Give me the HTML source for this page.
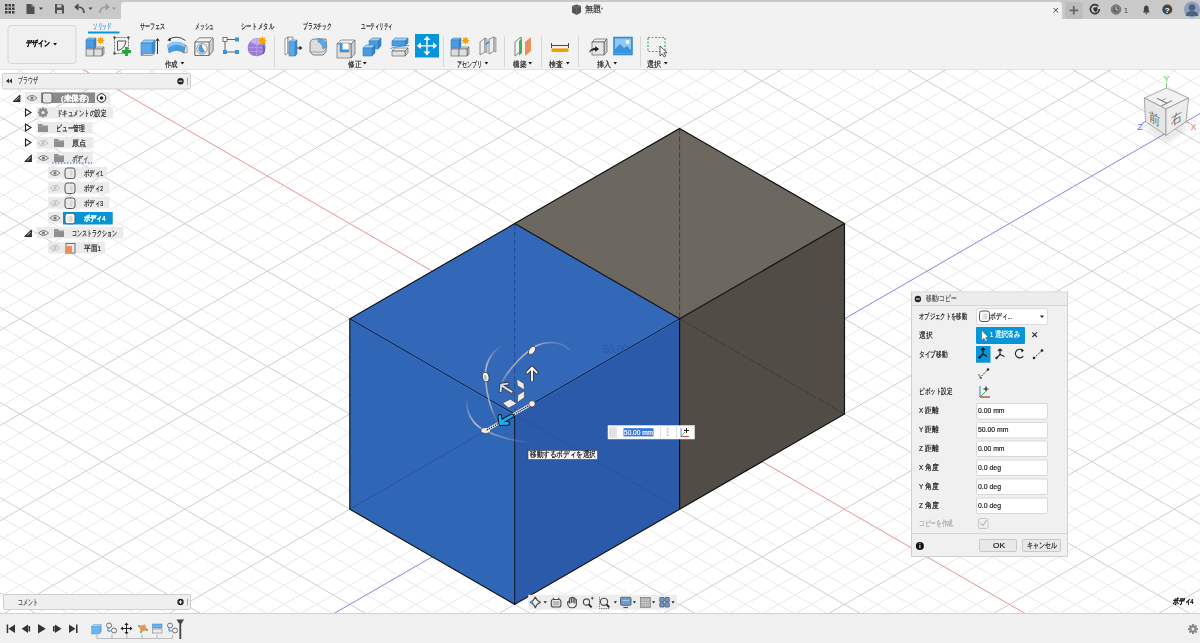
<!DOCTYPE html>
<html><head><meta charset="utf-8"><style>
*{box-sizing:border-box}
body{margin:0;width:1200px;height:643px;overflow:hidden;position:relative;background:#fff;font-family:"Liberation Sans",sans-serif;color:#222}
.a{position:absolute}
.t{white-space:nowrap;line-height:1;transform-origin:0 0;-webkit-text-stroke:0.2px currentColor}
</style></head><body>
<svg width="1200" height="643" style="position:absolute;left:0;top:0">
<defs><clipPath id="vpc"><rect x="0" y="69.5" width="1200" height="543.5"/></clipPath>
<linearGradient id="vcs" x1="0" y1="0" x2="0" y2="1"><stop offset="0" stop-color="#000" stop-opacity="0.18"/><stop offset="1" stop-color="#000" stop-opacity="0"/></linearGradient></defs>
<g clip-path="url(#vpc)">
<rect x="0" y="69.5" width="1200" height="543.5" fill="#ffffff"/>
<path d="M0 -606.67L1200 86.15M0 -587.63L1200 105.19M0 -568.59L1200 124.23M0 -530.51L1200 162.31M0 -511.47L1200 181.35M0 -492.43L1200 200.39M0 -473.39L1200 219.43M0 -435.31L1200 257.51M0 -416.27L1200 276.55M0 -397.23L1200 295.59M0 -378.19L1200 314.63M0 -340.11L1200 352.71M0 -321.07L1200 371.75M0 -302.03L1200 390.79M0 -282.99L1200 409.83M0 -244.91L1200 447.91M0 -225.87L1200 466.95M0 -206.83L1200 485.99M0 -187.79L1200 505.03M0 -149.71L1200 543.11M0 -130.67L1200 562.15M0 -111.63L1200 581.19M0 -92.59L1200 600.23M0 -54.51L1200 638.31M0 -35.47L1200 657.35M0 -16.43L1200 676.39M0 2.61L1200 695.43M0 40.69L1200 733.51M0 59.73L1200 752.55M0 78.77L1200 771.59M0 97.81L1200 790.63M0 135.89L1200 828.71M0 154.93L1200 847.75M0 173.97L1200 866.79M0 193.01L1200 885.83M0 231.09L1200 923.91M0 250.13L1200 942.95M0 269.17L1200 961.99M0 288.21L1200 981.03M0 326.29L1200 1019.11M0 345.33L1200 1038.15M0 364.37L1200 1057.19M0 383.41L1200 1076.23M0 421.49L1200 1114.31M0 440.53L1200 1133.35M0 459.57L1200 1152.39M0 478.61L1200 1171.43M0 516.69L1200 1209.51M0 535.73L1200 1228.55M0 554.77L1200 1247.59M0 573.81L1200 1266.63M0 611.89L1200 1304.71M0 82.83L1200 -609.99M0 101.87L1200 -590.95M0 120.91L1200 -571.91M0 158.99L1200 -533.83M0 178.03L1200 -514.79M0 197.07L1200 -495.75M0 216.11L1200 -476.71M0 254.19L1200 -438.63M0 273.23L1200 -419.59M0 292.27L1200 -400.55M0 311.31L1200 -381.51M0 349.39L1200 -343.43M0 368.43L1200 -324.39M0 387.47L1200 -305.35M0 406.51L1200 -286.31M0 444.59L1200 -248.23M0 463.63L1200 -229.19M0 482.67L1200 -210.15M0 501.71L1200 -191.11M0 539.79L1200 -153.03M0 558.83L1200 -133.99M0 577.87L1200 -114.95M0 596.91L1200 -95.91M0 634.99L1200 -57.83M0 654.03L1200 -38.79M0 673.07L1200 -19.75M0 692.11L1200 -0.71M0 730.19L1200 37.37M0 749.23L1200 56.41M0 768.27L1200 75.45M0 787.31L1200 94.49M0 825.39L1200 132.57M0 844.43L1200 151.61M0 863.47L1200 170.65M0 882.51L1200 189.69M0 920.59L1200 227.77M0 939.63L1200 246.81M0 958.67L1200 265.85M0 977.71L1200 284.89M0 1015.79L1200 322.97M0 1034.83L1200 342.01M0 1053.87L1200 361.05M0 1072.91L1200 380.09M0 1110.99L1200 418.17M0 1130.03L1200 437.21M0 1149.07L1200 456.25M0 1168.11L1200 475.29M0 1206.19L1200 513.37M0 1225.23L1200 532.41M0 1244.27L1200 551.45M0 1263.31L1200 570.49M0 1301.39L1200 608.57" stroke="#e8e8e8" stroke-width="1" fill="none"/>
<path d="M0 -549.55L1200 143.27M0 -454.35L1200 238.47M0 -359.15L1200 333.67M0 -263.95L1200 428.87M0 -168.75L1200 524.07M0 -73.55L1200 619.27M0 21.65L1200 714.47M0 116.85L1200 809.67M0 212.05L1200 904.87M0 307.25L1200 1000.07M0 402.45L1200 1095.27M0 497.65L1200 1190.47M0 592.85L1200 1285.67M0 139.95L1200 -552.87M0 235.15L1200 -457.67M0 330.35L1200 -362.47M0 425.55L1200 -267.27M0 520.75L1200 -172.07M0 615.95L1200 -76.87M0 711.15L1200 18.33M0 806.35L1200 113.53M0 901.55L1200 208.73M0 996.75L1200 303.93M0 1091.95L1200 399.13M0 1187.15L1200 494.33M0 1282.35L1200 589.53" stroke="#cecece" stroke-width="1" fill="none"/>
<path d="M0 21.65L1200 714.47" stroke="#f4a0a0" stroke-width="1" fill="none"/>
<path d="M0 806.35L1200 113.53" stroke="#9393f2" stroke-width="1" fill="none"/>
<polygon points="679.60,128.40 844.50,223.60 679.60,318.80 514.70,223.60" fill="#6c675f"/>
<polygon points="844.50,223.60 844.50,414.00 679.60,509.20 679.60,318.80" fill="#514c45"/>
<path d="M679.60 128.40L679.60 318.80" stroke="#45413b" stroke-width="1" stroke-dasharray="6,2" fill="none"/>
<path d="M679.60 318.80L844.50 414.00" stroke="#3d3a35" stroke-width="1" stroke-dasharray="6,2" fill="none"/>
<polygon points="514.70,223.60 679.60,318.80 514.70,414.00 349.80,318.80" fill="#3368b8"/>
<polygon points="349.80,318.80 514.70,414.00 514.70,604.40 349.80,509.20" fill="#3066b6"/>
<polygon points="514.70,414.00 679.60,318.80 679.60,509.20 514.70,604.40" fill="#2a5aa9"/>
<path d="M514.70 414.00L679.60 509.20M514.70 414.00L349.80 509.20" stroke="#2552a2" stroke-width="0.9" fill="none"/><path d="M514.70 223.60L514.70 414.00" stroke="#1f4c98" stroke-width="1" stroke-dasharray="6,2" fill="none"/>
<path d="M349.80 318.80L514.70 414.00M514.70 414.00L679.60 318.80" stroke="#3c7ad6" stroke-width="2.4" fill="none"/><path d="M349.80 318.80L514.70 414.00M514.70 414.00L679.60 318.80" stroke="#14223f" stroke-width="1.1" fill="none"/><path d="M514.70 414.00L514.70 604.40" stroke="#3a78d0" stroke-width="2.6" fill="none"/><path d="M514.70 414.00L514.70 604.40" stroke="#13203c" stroke-width="1.5" fill="none"/>
<path d="M679.60,128.40L844.50,223.60L844.50,414.00L679.60,509.20L514.70,604.40L349.80,509.20L349.80,318.80L514.70,223.60Z" stroke="#111" stroke-width="1.15" fill="none"/>
<path d="M514.70 223.60L679.60 318.80M679.60 318.80L844.50 223.60M679.60 318.80L679.60 509.20" stroke="#111" stroke-width="1.2" fill="none"/>
<text x="603" y="353" font-size="10" fill="#2659ad" font-family="Liberation Sans, sans-serif">50.00</text>

<defs>
<linearGradient id="arcA" x1="0" y1="0" x2="0" y2="1"><stop offset="0" stop-color="#c4c4c4" stop-opacity="0"/><stop offset="0.25" stop-color="#c4c4c4" stop-opacity="0.9"/><stop offset="0.8" stop-color="#bcbcbc" stop-opacity="0.8"/><stop offset="1" stop-color="#bcbcbc" stop-opacity="0.1"/></linearGradient>
<linearGradient id="arcB" x1="1" y1="0" x2="0" y2="1"><stop offset="0" stop-color="#c4c4c4" stop-opacity="0"/><stop offset="0.3" stop-color="#c4c4c4" stop-opacity="0.9"/><stop offset="0.75" stop-color="#bcbcbc" stop-opacity="0.7"/><stop offset="1" stop-color="#bcbcbc" stop-opacity="0"/></linearGradient>
<linearGradient id="arcC" x1="0" y1="0" x2="1" y2="1"><stop offset="0" stop-color="#c4c4c4" stop-opacity="0.1"/><stop offset="0.35" stop-color="#c4c4c4" stop-opacity="0.9"/><stop offset="1" stop-color="#bcbcbc" stop-opacity="0"/></linearGradient>
<linearGradient id="arrUL" x1="0" y1="0" x2="1" y2="1"><stop offset="0" stop-color="#c9d8f0"/><stop offset="1" stop-color="#f4f4f4"/></linearGradient>
</defs>
<path d="M502.8 345.3C490 352 484 366 485.5 380C487 396 491 410 496.8 420.6" stroke="url(#arcA)" stroke-width="1.6" fill="none"/>
<path d="M569.6 349.6C562 342 548 340 536 346C524 353 512 366 505 377C501.5 383 499.5 387 498.5 389.8" stroke="url(#arcB)" stroke-width="1.6" fill="none"/>
<path d="M466.8 400C466 412 472 424 484 430C496 436 512 441 531.9 442.9" stroke="url(#arcC)" stroke-width="1.6" fill="none"/>
<g stroke="#3a3a3a" stroke-width="0.8" fill="#f2f2f2">
<ellipse cx="532" cy="350.4" rx="2.8" ry="4.6" transform="rotate(35 532 350.4)"/>
<ellipse cx="485.7" cy="377" rx="3.2" ry="4.8" transform="rotate(-12 485.7 377)"/>
<ellipse cx="485.7" cy="430.5" rx="4.8" ry="2.9"/>
</g>
<ellipse cx="485.3" cy="377.5" rx="1.2" ry="2.6" fill="#9fb6dc" transform="rotate(-12 485.7 377)"/>
<path d="M532 403.8L486 430.5" stroke="#f4f4f4" stroke-width="2.8"/>
<path d="M532 403.8L486 430.5" stroke="#111" stroke-width="1.4" stroke-dasharray="1.2,1"/>
<circle cx="532" cy="403.8" r="3.3" fill="#eee" stroke="#333" stroke-width="0.8"/>
<g fill="#ececec" stroke="#3a3a3a" stroke-width="0.6">
<path d="M516.8 379L523.9 383.4L524.4 390L517.3 385.6Z"/>
<path d="M517.9 394.9L524.4 391L524.4 397.6L517.3 402.5Z"/>
<path d="M502.6 403L510.3 399.2L516.8 403.6L508.6 408Z"/>
</g>
<path d="M532 380.5V368M527.2 372.6L532 367.6L536.8 372.6" stroke="#333" stroke-width="3.6" stroke-linecap="round" stroke-linejoin="round" fill="none"/>
<path d="M532 380.5V368M527.2 372.6L532 367.6L536.8 372.6" stroke="#fafafa" stroke-width="1.9" stroke-linecap="round" stroke-linejoin="round" fill="none"/>
<path d="M511.6 391.8L502 385.6M500.6 391.2L501.2 384.6L507.6 383.6" stroke="#3a3a3a" stroke-width="3.6" stroke-linecap="round" stroke-linejoin="round" fill="none"/>
<path d="M511.6 391.8L502 385.6M500.6 391.2L501.2 384.6L507.6 383.6" stroke="url(#arrUL)" stroke-width="1.9" stroke-linecap="round" stroke-linejoin="round" fill="none"/>
<path d="M512 415.8L501.5 421.6M499.8 416.4L500.6 423.6L507.6 423.4" stroke="#111" stroke-width="4.6" stroke-linecap="round" stroke-linejoin="round" fill="none"/>
<path d="M512 415.8L501.5 421.6M499.8 416.4L500.6 423.6L507.6 423.4" stroke="#1aaef2" stroke-width="2.7" stroke-linecap="round" stroke-linejoin="round" fill="none"/>

<!-- viewcube -->
<defs><filter id="vcb" x="-50%" y="-50%" width="200%" height="200%"><feGaussianBlur stdDeviation="3"/></filter></defs><path d="M1148 124L1166 137L1186 124L1186 128L1166 141L1148 128Z" fill="#000" opacity="0.22" filter="url(#vcb)"/>
<path d="M1166.5 88L1188.5 98L1166 109L1144.3 98Z" fill="#f2f2f2" stroke="#8a8a8a" stroke-width="0.7"/>
<path d="M1144.3 98L1166 109L1166 135.3L1145.5 121.6Z" fill="#e6e6e6" stroke="#8a8a8a" stroke-width="0.7"/>
<path d="M1166 109L1188.5 98L1186 121.6L1166 135.3Z" fill="#ececec" stroke="#8a8a8a" stroke-width="0.7"/>
<g fill="#6a6a6a" font-size="13" font-family="Liberation Sans, sans-serif">
<text x="0" y="0" text-anchor="middle" transform="translate(1166.5,103) matrix(0.87,-0.45,0.87,0.45,0,0)">上</text>
<text x="0" y="4.5" text-anchor="middle" transform="translate(1155,118.5) matrix(0.85,0.5,0,1,0,0)">前</text>
<text x="0" y="4.5" text-anchor="middle" transform="translate(1177,118.5) matrix(0.85,-0.5,0,1,0,0)">右</text>
</g>
<path d="M1166.5 88V83" stroke="#6ad66a" stroke-width="1"/>
<text x="1166.5" y="82" font-size="9" fill="#66cc66" text-anchor="middle">Y</text>
<path d="M1145.5 121.6L1142 123.5" stroke="#7070f0" stroke-width="1"/>
<text x="1140" y="130" font-size="9" fill="#6c6cf0" text-anchor="middle">Z</text>
<path d="M1186 121.6L1190 123.5" stroke="#f07070" stroke-width="1"/>
<text x="1193.5" y="130" font-size="9" fill="#f07070" text-anchor="middle">X</text>
</g>
</svg>
<svg width="1200" height="70" style="position:absolute;left:0;top:0">
<rect x="0" y="0" width="1200" height="19" fill="#c9c9c9"/>
<path d="M121 19V5Q121 2 124 2H1059Q1062 2 1062 5V19Z" fill="#f2f2f2"/>
<rect x="1065" y="2" width="17.5" height="17" rx="2" fill="#bcbcbc"/>
<rect x="0" y="19" width="1200" height="50.5" fill="#f2f2f2"/>
<path d="M0 69.5H1200" stroke="#e2e2e2"/>
<g fill="#3c3c3c">
<rect x="5" y="4" width="2.5" height="2.5"/><rect x="8.5" y="4" width="2.5" height="2.5"/><rect x="12" y="4" width="2.5" height="2.5"/>
<rect x="5" y="7.5" width="2.5" height="2.5"/><rect x="8.5" y="7.5" width="2.5" height="2.5"/><rect x="12" y="7.5" width="2.5" height="2.5"/>
<rect x="5" y="11" width="2.5" height="2.5"/><rect x="8.5" y="11" width="2.5" height="2.5"/><rect x="12" y="11" width="2.5" height="2.5"/>
</g>
<path d="M26.5 4H31.5L34.5 7V14H26.5Z" fill="#505050"/><path d="M31.5 4V7H34.5" fill="#888"/>
<path d="M39 7.5H43L41 10Z" fill="#444"/>
<path d="M55 4H62L64 6V13.5H55Z" fill="#505050"/><rect x="57" y="4.5" width="4.5" height="3" fill="#c9c9c9"/><rect x="57" y="10" width="5" height="3.5" fill="#c9c9c9"/>
<path d="M84 13Q84 7 78 7H76M78.5 4.3L75.5 7L78.5 9.7" stroke="#4a4a4a" stroke-width="1.7" fill="none"/>
<path d="M88.5 7.5H92.5L90.5 10Z" fill="#444"/>
<path d="M100 13Q100 7 106 7H108M105.5 4.3L108.5 7L105.5 9.7" stroke="#9a9a9a" stroke-width="1.7" fill="none"/>
<path d="M112 7.5H116L114 10Z" fill="#9a9a9a"/>
<path d="M572 6L576.5 4.5L581 6V12.5L576.5 15L572 12.5Z" fill="#555"/><path d="M572 6L576.5 7.5L581 6" stroke="#888" stroke-width="0.6" fill="none"/><path d="M576.5 7.5V15" stroke="#777" stroke-width="0.6"/>
<path d="M1053.5 8L1058 12.5M1058 8L1053.5 12.5" stroke="#444" stroke-width="1"/>
<path d="M1073.8 6V14.6M1069.5 10.3H1078.1" stroke="#666" stroke-width="1.8"/>
<path d="M1098.3 6.2A4.5 4.5 0 1 0 1099.4 9" fill="none" stroke="#333" stroke-width="1.6"/><path d="M1093.2 8.2Q1094.5 6.8 1096 7.6L1097.2 6.6L1097.6 9Q1097.8 11.5 1095.5 12Q1093.5 11.5 1093.2 8.2Z" fill="#333"/>
<circle cx="1116" cy="9.5" r="4.8" fill="#8a8a8a" stroke="#555" stroke-width="0.6"/><circle cx="1116" cy="9.5" r="3.3" fill="#666"/><path d="M1116 7V9.8H1118" stroke="#ddd" stroke-width="0.9" fill="none"/>
<text x="1124" y="12.5" font-size="7" fill="#444">1</text>
<path d="M1143 12.5Q1144 11.5 1144 8.5Q1144 5.5 1146.3 5.5Q1148.6 5.5 1148.6 8.5Q1148.6 11.5 1149.6 12.5Z" fill="#444"/><circle cx="1146.3" cy="13.3" r="0.9" fill="#444"/>
<circle cx="1167.3" cy="9.5" r="5" fill="#444"/><text x="1167.3" y="12.5" font-size="8" font-weight="bold" fill="#fff" text-anchor="middle">?</text>
<circle cx="1192" cy="9.5" r="8" fill="#8aa0c0"/><circle cx="1192" cy="7.5" r="3.3" fill="#4e6280"/><path d="M1185.5 16Q1186.5 11 1192 11Q1197.5 11 1198.5 16Z" fill="#4e6280"/>
<path d="M88 32.5H119.5" stroke="#0696d7" stroke-width="2"/>
<rect x="8" y="25.5" width="68" height="38" rx="3" fill="#f0f0f0" stroke="#d6d6d6"/>
<path d="M274.5 36V67" stroke="#d8d8d8"/><path d="M443.5 36V67" stroke="#d8d8d8"/><path d="M504.5 36V67" stroke="#d8d8d8"/><path d="M541.5 36V67" stroke="#d8d8d8"/><path d="M578.5 36V67" stroke="#d8d8d8"/><path d="M640.5 36V67" stroke="#d8d8d8"/>
<g transform="translate(85,36) scale(1.0)"><path d="M1 13L3 11L11 11L9 13Z" fill="#e8e8e8" stroke="#555" stroke-width="0.6"/><path d="M9 13L11 11L11 18L9 20Z" fill="#c8c8c8" stroke="#555" stroke-width="0.6"/><rect x="1" y="13" width="8" height="7" fill="#dcdcdc" stroke="#555" stroke-width="0.6"/><path d="M9 13L11 11L19 11L17 13Z" fill="#e8e8e8" stroke="#555" stroke-width="0.6"/><path d="M17 13L19 11L19 18L17 20Z" fill="#c8c8c8" stroke="#555" stroke-width="0.6"/><rect x="9" y="13" width="8" height="7" fill="#e0e0e0" stroke="#555" stroke-width="0.6"/><path d="M1 4L3 2L11 2L9 4Z" fill="#8cc4f0" stroke="#3a7fc0" stroke-width="0.6"/><path d="M9 4L11 2L11 10L9 12Z" fill="#3583c8" stroke="#3a7fc0" stroke-width="0.6"/><rect x="1" y="4" width="8" height="8" fill="#4a9be0" stroke="#3a7fc0" stroke-width="0.6"/><g fill="#f5a300"><path d="M15.5 0.2999999999999998L16.676000000000002 3.324L19.7 4.5L16.676000000000002 5.676L15.5 8.7L14.324 5.676L11.3 4.5L14.324 3.324Z" transform="rotate(0 15.5 4.5)"/><path d="M15.5 0.2999999999999998L16.676000000000002 3.324L19.7 4.5L16.676000000000002 5.676L15.5 8.7L14.324 5.676L11.3 4.5L14.324 3.324Z" transform="rotate(45 15.5 4.5)"/><circle cx="15.5" cy="4.5" r="1.8900000000000001"/></g></g><g transform="translate(112,36) scale(1.0)"><rect x="2.5" y="1.5" width="14" height="16" fill="none" stroke="#555" stroke-width="0.8" stroke-dasharray="2,1"/><path d="M5.5 5V14.5M5.5 5H14M5.5 14.5Q13 13 14 5" fill="none" stroke="#444" stroke-width="0.9"/><rect x="1.5" y="0.5" width="2" height="2" fill="#333"/><rect x="15.5" y="0.5" width="2" height="2" fill="#333"/><rect x="1.5" y="16.5" width="2" height="2" fill="#333"/><path d="M14.5 11V20M10 15.5H19" stroke="#1ea83c" stroke-width="2.8"/></g><g transform="translate(140,36) scale(1.0)"><path d="M1 7L4 4L15 4L12 7Z" fill="#9fd0f5" stroke="#3a7fc0" stroke-width="0.6"/><path d="M12 7L15 4L15 16L12 19Z" fill="#3c8ad0" stroke="#3a7fc0" stroke-width="0.6"/><rect x="1" y="7" width="11" height="12" fill="#5aa8e6" stroke="#3a7fc0" stroke-width="0.6"/><path d="M1 19.5L4 17.5H15L12 19.5Z" fill="#d8d8d8" stroke="#666" stroke-width="0.5"/><path d="M17.5 18V3M15.8 5.2L17.5 2.5L19.2 5.2" stroke="#333" stroke-width="1" fill="none"/></g><g transform="translate(167,36) scale(1.0)"><path d="M0.5 9Q9 3 18.5 9L17 17Q9.5 12 2 17Z" fill="#4a9be0" stroke="#3a86cc" stroke-width="0.5"/><path d="M0.5 9Q9 3 18.5 9L18 11.5Q9.5 6 1 12Z" fill="#8cc8f4"/><path d="M18.5 9L20 11V16.5L17 17Z" fill="#fafafa" stroke="#555" stroke-width="0.6"/><path d="M18.5 4.5Q10 -1.5 2 3.2" fill="none" stroke="#333" stroke-width="0.9"/><path d="M0.3 4.2L3.6 1.6L3.6 5.2Z" fill="#222"/></g><g transform="translate(194,36) scale(1.0)"><path d="M1 6L5 2H19V15L15 19.5H1Z" fill="#e4e4e4" stroke="#555" stroke-width="0.7"/><path d="M1 6L5 2H19L15 6Z" fill="#f4f4f4" stroke="#666" stroke-width="0.5"/><path d="M15 6L19 2V15L15 19.5Z" fill="#cfcfcf" stroke="#666" stroke-width="0.5"/><rect x="1" y="6" width="14" height="13.5" fill="#ececec" stroke="#555" stroke-width="0.7"/><circle cx="8" cy="12.8" r="5.2" fill="#fafafa" stroke="#8a7a70" stroke-width="0.8"/><path d="M4.5 11Q5.5 8.5 8 8.2Q8 13 11.5 15.5Q9 17.5 6.3 16.5Q3.8 14.5 4.5 11Z" fill="#4a9be0"/></g><g transform="translate(221,36) scale(1.0)"><path d="M4 3.5H15M4 3.5V16M4 16H15" stroke="#555" stroke-width="0.9" fill="none"/><rect x="2" y="1.5" width="4" height="4" fill="#fff" stroke="#555" stroke-width="0.8"/><rect x="14" y="1.5" width="4" height="4" fill="#3a94dc"/><rect x="2" y="14" width="4" height="4" fill="#3a94dc"/><rect x="14" y="14" width="4" height="4" fill="#3a94dc"/></g><g transform="translate(247,36) scale(1.0)"><path d="M3 6Q6 2 11 2.5Q17 3 18 9Q19 15 15 18.5Q10 21 5 19Q1 17 1 12Q1 8.5 3 6Z" fill="#9b7ed6" stroke="#7d60c0" stroke-width="0.5"/><path d="M3 6Q6 2 11 2.5Q16 3 17 7L10 9Z" fill="#c4b0f0"/><path d="M2 11.5H17M9.5 3V20M2.5 15.5H16" stroke="#b8a2ea" stroke-width="0.7" fill="none"/><path d="M16 10Q18.5 13 16 18" stroke="#7050b8" stroke-width="1.5" fill="none"/><g fill="#f5a300"><path d="M15.5 0.0L16.76 3.2399999999999998L20.0 4.5L16.76 5.76L15.5 9.0L14.24 5.76L11.0 4.5L14.24 3.2399999999999998Z" transform="rotate(0 15.5 4.5)"/><path d="M15.5 0.0L16.76 3.2399999999999998L20.0 4.5L16.76 5.76L15.5 9.0L14.24 5.76L11.0 4.5L14.24 3.2399999999999998Z" transform="rotate(45 15.5 4.5)"/><circle cx="15.5" cy="4.5" r="2.025"/></g></g><g transform="translate(282,36) scale(1.0)"><path d="M3 3L6 1V17L3 19Z" fill="#fff" stroke="#555" stroke-width="0.6"/><path d="M6 1H11V17H6Z" fill="#eee" stroke="#555" stroke-width="0.6"/><path d="M7 6L9 4L15 4L13 6Z" fill="#a8d5f7" stroke="#3a7fc0" stroke-width="0.6"/><path d="M13 6L15 4L15 18L13 20Z" fill="#3c8ad0" stroke="#3a7fc0" stroke-width="0.6"/><rect x="7" y="6" width="6" height="14" fill="#5aa8e6" stroke="#3a7fc0" stroke-width="0.6"/><path d="M15 12H19M17.5 10.5L19.5 12L17.5 13.5" stroke="#222" stroke-width="1.1" fill="none"/></g><g transform="translate(309,36) scale(1.0)"><path d="M1 8Q1 3 6 3H9L17 3Q18 8 17 16L14 19H4L1 16Z" fill="#ddd" stroke="#555" stroke-width="0.7"/><path d="M9 2.5Q17 2.5 18 11L14 13Q13 7 9 6Z" fill="#5aa8e6" stroke="#3a7fc0" stroke-width="0.5"/><path d="M1 16H14L17 13" fill="none" stroke="#666" stroke-width="0.5"/></g><g transform="translate(336,36) scale(1.0)"><path d="M1 8L5 4L19 4L15 8Z" fill="#f0f0f0" stroke="#555" stroke-width="0.6"/><path d="M15 8L19 4L19 18L15 22Z" fill="#cfcfcf" stroke="#555" stroke-width="0.6"/><rect x="1" y="8" width="14" height="14" fill="#e0e0e0" stroke="#555" stroke-width="0.6"/><path d="M4 7H13V16H4Z" fill="#fff" stroke="#666" stroke-width="0.5"/><path d="M4 7H6.5V13.5H13V16H4Z" fill="#3a94dc"/></g><g transform="translate(362,36) scale(1.0)"><path d="M7 5L10 2L19 2L16 5Z" fill="#9fd0f5" stroke="#3a7fc0" stroke-width="0.6"/><path d="M16 5L19 2L19 10L16 13Z" fill="#3583c8" stroke="#3a7fc0" stroke-width="0.6"/><rect x="7" y="5" width="9" height="8" fill="#4a9be0" stroke="#3a7fc0" stroke-width="0.6"/><path d="M1 12L4 9L13 9L10 12Z" fill="#9fd0f5" stroke="#3a7fc0" stroke-width="0.6"/><path d="M10 12L13 9L13 17L10 20Z" fill="#3583c8" stroke="#3a7fc0" stroke-width="0.6"/><rect x="1" y="12" width="9" height="8" fill="#4a9be0" stroke="#3a7fc0" stroke-width="0.6"/></g><g transform="translate(390,36) scale(1.0)"><path d="M2 5L5 2L18 2L15 5Z" fill="#9fd0f5" stroke="#3a7fc0" stroke-width="0.6"/><path d="M15 5L18 2L18 7L15 10Z" fill="#3583c8" stroke="#3a7fc0" stroke-width="0.6"/><rect x="2" y="5" width="13" height="5" fill="#4a9be0" stroke="#3a7fc0" stroke-width="0.6"/><path d="M0.5 12.5Q8 10 19 9.5" stroke="#3a94dc" stroke-width="1.2" fill="none"/><path d="M2 15L5 12L18 12L15 15Z" fill="#f0f0f0" stroke="#555" stroke-width="0.6"/><path d="M15 15L18 12L18 17L15 20Z" fill="#cfcfcf" stroke="#555" stroke-width="0.6"/><rect x="2" y="15" width="13" height="5" fill="#e0e0e0" stroke="#555" stroke-width="0.6"/></g><g transform="translate(416,35.5) scale(1.0)"><rect x="-1" y="-1.5" width="24" height="23.5" fill="#0696d7"/><path d="M11 1.5V19M2 10.2H20" stroke="#fff" stroke-width="1.4"/><path d="M11 0.5L7.6 4.5H14.4Z M11 20L7.6 16H14.4Z M0.8 10.2L4.8 6.8V13.6Z M21.2 10.2L17.2 6.8V13.6Z" fill="#fff"/></g><g transform="translate(450,36) scale(1.0)"><path d="M1 13L3 11L11 11L9 13Z" fill="#e8e8e8" stroke="#555" stroke-width="0.6"/><path d="M9 13L11 11L11 18L9 20Z" fill="#c8c8c8" stroke="#555" stroke-width="0.6"/><rect x="1" y="13" width="8" height="7" fill="#dcdcdc" stroke="#555" stroke-width="0.6"/><path d="M9 13L11 11L19 11L17 13Z" fill="#e8e8e8" stroke="#555" stroke-width="0.6"/><path d="M17 13L19 11L19 18L17 20Z" fill="#c8c8c8" stroke="#555" stroke-width="0.6"/><rect x="9" y="13" width="8" height="7" fill="#e0e0e0" stroke="#555" stroke-width="0.6"/><path d="M1 4L3 2L11 2L9 4Z" fill="#8cc4f0" stroke="#3a7fc0" stroke-width="0.6"/><path d="M9 4L11 2L11 10L9 12Z" fill="#3583c8" stroke="#3a7fc0" stroke-width="0.6"/><rect x="1" y="4" width="8" height="8" fill="#4a9be0" stroke="#3a7fc0" stroke-width="0.6"/><g fill="#f5a300"><path d="M15.5 0.2999999999999998L16.676000000000002 3.324L19.7 4.5L16.676000000000002 5.676L15.5 8.7L14.324 5.676L11.3 4.5L14.324 3.324Z" transform="rotate(0 15.5 4.5)"/><path d="M15.5 0.2999999999999998L16.676000000000002 3.324L19.7 4.5L16.676000000000002 5.676L15.5 8.7L14.324 5.676L11.3 4.5L14.324 3.324Z" transform="rotate(45 15.5 4.5)"/><circle cx="15.5" cy="4.5" r="1.8900000000000001"/></g></g><g transform="translate(478,36) scale(1.0)"><path d="M2 6L7 2V16L2 19Z" fill="#eee" stroke="#666" stroke-width="0.7"/><path d="M7 2L9 3V17L7 16Z" fill="#ccc" stroke="#666" stroke-width="0.5"/><path d="M11 3L16 1V15L11 18Z" fill="#eee" stroke="#666" stroke-width="0.7"/><path d="M16 1L18 2V16L16 15Z" fill="#ccc" stroke="#666" stroke-width="0.5"/><path d="M7.5 8L11.5 6" stroke="#3a94dc" stroke-width="1.6"/></g><g transform="translate(513,36) scale(1.0)"><path d="M2 6L8 1V15L2 20Z" fill="#f4f4f4" stroke="#555" stroke-width="0.7"/><path d="M6 5L9 2.5V17L6 19.5Z" fill="#3cb454"/><path d="M12 6L18 1V15L12 20Z" fill="#e8915a"/></g><g transform="translate(550,36) scale(1.0)"><path d="M1.5 7V12M18.5 7V12M2 9.5H18" stroke="#333" stroke-width="0.9"/><path d="M1.5 12.5H18.5V16H1.5Z" fill="#f5a300"/><path d="M4 12.5V14M7 12.5V14M10 12.5V14.5M13 12.5V14M16 12.5V14" stroke="#b07000" stroke-width="0.5"/></g><g transform="translate(587,36) scale(1.0)"><path d="M5 6L8 3L20 3L17 6Z" fill="#f0f0f0" stroke="#444" stroke-width="0.6"/><path d="M17 6L20 3L20 16L17 19Z" fill="#cfcfcf" stroke="#444" stroke-width="0.6"/><rect x="5" y="6" width="12" height="13" fill="#e6e6e6" stroke="#444" stroke-width="0.6"/><path d="M1.5 17.5Q2.5 12 8 11.5V9.5L12.5 13L8 16.5V14.5Q4 14.5 1.5 17.5Z" fill="#222" stroke="#fff" stroke-width="0.6"/></g><g transform="translate(613,36) scale(1.0)"><rect x="0.5" y="1" width="19" height="18" fill="#3a94dc" stroke="#2a7cc0" stroke-width="0.5"/><rect x="2" y="2.5" width="16" height="15" fill="#8fc8f2"/><path d="M2 17.5L2 13L7 8L11 12L14 10L18 14V17.5Z" fill="#3a94dc"/><circle cx="14.5" cy="6" r="2" fill="#fff"/></g><g transform="translate(647,36) scale(1.0)"><rect x="1" y="1.5" width="17" height="14" fill="none" stroke="#3cb454" stroke-width="1.2" stroke-dasharray="2,1.5"/><path d="M13 10L13 20L15.2 17.8L17.2 21L18.8 20L16.8 16.8H20Z" fill="#fff" stroke="#333" stroke-width="0.8"/></g>
<path d="M180.6 62H184.2L182.4 64.4Z" fill="#111"/><path d="M363 62H366.6L364.8 64.4Z" fill="#111"/><path d="M484.6 62H488.20000000000005L486.40000000000003 64.4Z" fill="#111"/><path d="M528.4 62H532.0L530.1999999999999 64.4Z" fill="#111"/><path d="M566 62H569.6L567.8 64.4Z" fill="#111"/><path d="M613.4 62H617.0L615.1999999999999 64.4Z" fill="#111"/><path d="M664 62H667.6L665.8 64.4Z" fill="#111"/><path d="M53.2 43.1H57L55.1 45.5Z" fill="#111"/><circle cx="602" cy="8.5" r="0.9" fill="#3a7fc0"/>
</svg>
<div class="a t fit" style="left:585px;top:5px;font-size:9px;color:#333;font-weight:normal;--w:16.5px;">無題</div><div class="a t fit" style="left:93px;top:22.5px;font-size:7.5px;color:#1e90d8;font-weight:normal;--w:18px;">ソリッド</div><div class="a t fit" style="left:140px;top:22.5px;font-size:7.5px;color:#1a1a1a;font-weight:normal;--w:25px;">サーフェス</div><div class="a t fit" style="left:195px;top:22.5px;font-size:7.5px;color:#1a1a1a;font-weight:normal;--w:19px;">メッシュ</div><div class="a t fit" style="left:241px;top:22.5px;font-size:7.5px;color:#1a1a1a;font-weight:normal;--w:33px;">シート メタル</div><div class="a t fit" style="left:302.5px;top:22.5px;font-size:7.5px;color:#1a1a1a;font-weight:normal;--w:28.5px;">プラスチック</div><div class="a t fit" style="left:361px;top:22.5px;font-size:7.5px;color:#1a1a1a;font-weight:normal;--w:32px;">ユーティリティ</div><div class="a t fit" style="left:165px;top:60.5px;font-size:7.5px;color:#1a1a1a;font-weight:normal;--w:12.8px;">作成</div><div class="a t fit" style="left:347.5px;top:60.5px;font-size:7.5px;color:#1a1a1a;font-weight:normal;--w:13px;">修正</div><div class="a t fit" style="left:457px;top:60.5px;font-size:7.5px;color:#1a1a1a;font-weight:normal;--w:25px;">アセンブリ</div><div class="a t fit" style="left:513px;top:60.5px;font-size:7.5px;color:#1a1a1a;font-weight:normal;--w:13px;">構築</div><div class="a t fit" style="left:549px;top:60.5px;font-size:7.5px;color:#1a1a1a;font-weight:normal;--w:14px;">検査</div><div class="a t fit" style="left:597px;top:60.5px;font-size:7.5px;color:#1a1a1a;font-weight:normal;--w:14px;">挿入</div><div class="a t fit" style="left:647px;top:60.5px;font-size:7.5px;color:#1a1a1a;font-weight:normal;--w:14px;">選択</div><div class="a t fit" style="left:26.2px;top:40px;font-size:8px;color:#111;font-weight:bold;--w:23.8px;">デザイン</div>
<svg width="200" height="260" style="position:absolute;left:0;top:0">
<rect x="2.5" y="73.5" width="188" height="15.5" rx="1.5" fill="#efefef" stroke="#d0d0d0"/>
<path d="M9 78.5L6 81L9 83.5Z M12 78.5L9 81L12 83.5Z" fill="#333"/>
<circle cx="180.5" cy="81.2" r="3.2" fill="#222"/><path d="M178.7 81.2H182.3" stroke="#fff" stroke-width="1"/>
<path d="M187.5 77.5V85" stroke="#aaa" stroke-width="1"/>
<rect x="25" y="92" width="85" height="11.5" fill="#e9e9e9" fill-opacity="0.9"/><rect x="36.5" y="107" width="76.5" height="11.5" fill="#e9e9e9" fill-opacity="0.9"/><rect x="36.6" y="122" width="56" height="11.5" fill="#e9e9e9" fill-opacity="0.9"/><rect x="36.6" y="137" width="57" height="11.5" fill="#e9e9e9" fill-opacity="0.9"/><rect x="36.6" y="152" width="56" height="11.5" fill="#e9e9e9" fill-opacity="0.9"/><rect x="48" y="167" width="59" height="11.5" fill="#e9e9e9" fill-opacity="0.9"/><rect x="48" y="182" width="61.5" height="11.5" fill="#e9e9e9" fill-opacity="0.9"/><rect x="48" y="197" width="61.5" height="11.5" fill="#e9e9e9" fill-opacity="0.9"/><rect x="48" y="212" width="64.5" height="11.5" fill="#e9e9e9" fill-opacity="0.9"/><rect x="36.6" y="227" width="86.5" height="11.5" fill="#e9e9e9" fill-opacity="0.9"/><rect x="48" y="242" width="57" height="11.5" fill="#e9e9e9" fill-opacity="0.9"/>
<path d="M13.6 101.4L19.8 95.4V101.4Z" fill="none" stroke="#222" stroke-width="1.2" stroke-linejoin="round"/><path d="M15.5 101L19.4 97.2V101Z" fill="#333"/>
<path d="M27 98.0Q32 93.0 37 98.0Q32 103.0 27 98.0Z" fill="none" stroke="#7a7a7a" stroke-width="1"/><circle cx="32" cy="98.0" r="1.6" fill="#7a7a7a"/>
<rect x="41" y="92.5" width="54" height="10.5" fill="#8a8a8a"/>
<rect x="42.5" y="93" width="9.5" height="10" rx="2" fill="#e6e6e6" stroke="#555" stroke-width="0.8"/>
<circle cx="101.5" cy="98" r="4.3" fill="#fff" stroke="#222" stroke-width="1"/><circle cx="101.5" cy="98" r="1.8" fill="#222"/>
<path d="M25.5 109L31 112.5L25.5 116Z" fill="none" stroke="#222" stroke-width="1.1"/>
<rect x="41.8" y="107.5" width="2.4" height="10" fill="#8a8a8a" transform="rotate(0 43 112.5)"/><rect x="41.8" y="107.5" width="2.4" height="10" fill="#8a8a8a" transform="rotate(45 43 112.5)"/><rect x="41.8" y="107.5" width="2.4" height="10" fill="#8a8a8a" transform="rotate(90 43 112.5)"/><rect x="41.8" y="107.5" width="2.4" height="10" fill="#8a8a8a" transform="rotate(135 43 112.5)"/><circle cx="43" cy="112.5" r="3.6" fill="#8a8a8a"/><circle cx="43" cy="112.5" r="1.6" fill="#eee"/>
<path d="M25.5 124L31 127.5L25.5 131Z" fill="none" stroke="#222" stroke-width="1.1"/>
<path d="M38 124H42L43 125.5H48V132H38Z" fill="#8e8e8e"/><path d="M38 126H48" stroke="#bbb" stroke-width="0.5"/>
<path d="M25.5 139L31 142.5L25.5 146Z" fill="none" stroke="#222" stroke-width="1.1"/>
<path d="M38 143.0Q43 138.0 48 143.0Q43 148.0 38 143.0Z" fill="none" stroke="#c2c2c2" stroke-width="1"/><circle cx="43" cy="143.0" r="1.6" fill="#c2c2c2"/><path d="M40 147.0L46 139.0" stroke="#c2c2c2" stroke-width="0.8"/>
<path d="M54 139H58L59 140.5H64V147H54Z" fill="#8e8e8e"/><path d="M54 141H64" stroke="#bbb" stroke-width="0.5"/>
<path d="M25.1 161.4L31.3 155.4V161.4Z" fill="none" stroke="#222" stroke-width="1.2" stroke-linejoin="round"/><path d="M27.0 161L30.9 157.2V161Z" fill="#333"/>
<path d="M38.5 158.0Q43.5 153.0 48.5 158.0Q43.5 163.0 38.5 158.0Z" fill="none" stroke="#7a7a7a" stroke-width="1"/><circle cx="43.5" cy="158.0" r="1.6" fill="#7a7a7a"/>
<path d="M54 154H58L59 155.5H64V162H54Z" fill="#8e8e8e"/><path d="M54 156H64" stroke="#bbb" stroke-width="0.5"/>
<path d="M52 163H92" stroke="#3c64b4" stroke-width="1" stroke-dasharray="1.5,1.5"/>
<path d="M50 173.0Q55 168.0 60 173.0Q55 178.0 50 173.0Z" fill="none" stroke="#7a7a7a" stroke-width="1"/><circle cx="55" cy="173.0" r="1.6" fill="#7a7a7a"/>
<rect x="65.0" y="168.0" width="10" height="10.5" rx="2.5" fill="none" stroke="#555" stroke-width="1"/><rect x="67.5" y="170.5" width="5" height="6" fill="#d8d8d8"/><rect x="67.5" y="170.5" width="2.5" height="6" fill="#eaeaea"/>
<path d="M50 188.0Q55 183.0 60 188.0Q55 193.0 50 188.0Z" fill="none" stroke="#c2c2c2" stroke-width="1"/><circle cx="55" cy="188.0" r="1.6" fill="#c2c2c2"/><path d="M52 192.0L58 184.0" stroke="#c2c2c2" stroke-width="0.8"/>
<rect x="65.0" y="183.0" width="10" height="10.5" rx="2.5" fill="none" stroke="#555" stroke-width="1"/><rect x="67.5" y="185.5" width="5" height="6" fill="#d8d8d8"/><rect x="67.5" y="185.5" width="2.5" height="6" fill="#eaeaea"/>
<path d="M50 203.0Q55 198.0 60 203.0Q55 208.0 50 203.0Z" fill="none" stroke="#c2c2c2" stroke-width="1"/><circle cx="55" cy="203.0" r="1.6" fill="#c2c2c2"/><path d="M52 207.0L58 199.0" stroke="#c2c2c2" stroke-width="0.8"/>
<rect x="65.0" y="198.0" width="10" height="10.5" rx="2.5" fill="none" stroke="#555" stroke-width="1"/><rect x="67.5" y="200.5" width="5" height="6" fill="#d8d8d8"/><rect x="67.5" y="200.5" width="2.5" height="6" fill="#eaeaea"/>
<path d="M50 218.0Q55 213.0 60 218.0Q55 223.0 50 218.0Z" fill="none" stroke="#7a7a7a" stroke-width="1"/><circle cx="55" cy="218.0" r="1.6" fill="#7a7a7a"/>
<rect x="63" y="212" width="49.7" height="12.5" fill="#0696d7"/>
<rect x="65.0" y="213.3" width="10" height="10.5" rx="2.5" fill="#fff" stroke="#555" stroke-width="1"/><rect x="67.5" y="215.8" width="5" height="6" fill="#d8d8d8"/><rect x="67.5" y="215.8" width="2.5" height="6" fill="#eaeaea"/>
<path d="M25.1 236.4L31.3 230.4V236.4Z" fill="none" stroke="#222" stroke-width="1.2" stroke-linejoin="round"/><path d="M27.0 236L30.9 232.2V236Z" fill="#333"/>
<path d="M38.5 233.0Q43.5 228.0 48.5 233.0Q43.5 238.0 38.5 233.0Z" fill="none" stroke="#7a7a7a" stroke-width="1"/><circle cx="43.5" cy="233.0" r="1.6" fill="#7a7a7a"/>
<path d="M54 229H58L59 230.5H64V237H54Z" fill="#8e8e8e"/><path d="M54 231H64" stroke="#bbb" stroke-width="0.5"/>
<path d="M50 248.0Q55 243.0 60 248.0Q55 253.0 50 248.0Z" fill="none" stroke="#c2c2c2" stroke-width="1"/><circle cx="55" cy="248.0" r="1.6" fill="#c2c2c2"/><path d="M52 252.0L58 244.0" stroke="#c2c2c2" stroke-width="0.8"/>
<rect x="66" y="243.5" width="9" height="9.5" fill="none" stroke="#555" stroke-width="0.8"/>
<rect x="65" y="246" width="7" height="7.5" fill="#e8915a"/>
</svg><div class="a t fit" style="left:17.5px;top:77px;font-size:8px;color:#444;font-weight:normal;--w:20px;">ブラウザ</div><div class="a t fit" style="left:61px;top:94.5px;font-size:8px;color:#fff;font-weight:bold;--w:28px;">(未保存)</div><div class="a t fit" style="left:57px;top:109.5px;font-size:7.5px;color:#1a1a1a;font-weight:normal;--w:49px;">ドキュメントの設定</div><div class="a t fit" style="left:56px;top:124.5px;font-size:7.5px;color:#1a1a1a;font-weight:normal;--w:29px;">ビュー管理</div><div class="a t fit" style="left:72px;top:139.5px;font-size:7.5px;color:#1a1a1a;font-weight:normal;--w:14px;">原点</div><div class="a t fit" style="left:72px;top:154.5px;font-size:7.5px;color:#1a1a1a;font-weight:normal;--w:16px;"><i>ボディ</i></div><div class="a t fit" style="left:83.5px;top:169.5px;font-size:7.5px;color:#1a1a1a;font-weight:normal;--w:19px;">ボディ1</div><div class="a t fit" style="left:83.5px;top:184.5px;font-size:7.5px;color:#1a1a1a;font-weight:normal;--w:19px;">ボディ2</div><div class="a t fit" style="left:83.5px;top:199.5px;font-size:7.5px;color:#1a1a1a;font-weight:normal;--w:19px;">ボディ3</div><div class="a t fit" style="left:83.5px;top:214.5px;font-size:7.5px;color:#fff;font-weight:bold;--w:21.5px;">ボディ4</div><div class="a t fit" style="left:72px;top:229.5px;font-size:7.5px;color:#1a1a1a;font-weight:normal;--w:45.5px;">コンストラクション</div><div class="a t fit" style="left:84px;top:244.5px;font-size:7.5px;color:#1a1a1a;font-weight:normal;--w:17px;">平面1</div>
<svg width="1200" height="643" style="position:absolute;left:0;top:0">
<rect x="608" y="425.5" width="86.5" height="13.5" fill="#fff" stroke="#e0e0e0" stroke-width="0.6"/>
<rect x="609" y="426.5" width="8" height="11.5" fill="#e8e8e8"/>
<path d="M610.5 428V437M612.5 428V437M614.5 428V437" stroke="#ccc" stroke-width="0.5"/>
<rect x="623.5" y="428.2" width="30" height="8.2" fill="#3478e0"/>
<path d="M660.5 427V438M676.5 427V438" stroke="#e2e2e2"/>
<g fill="#555"><rect x="667.3" y="428.5" width="1" height="1"/><rect x="667.3" y="431.5" width="1" height="1"/><rect x="667.3" y="434.5" width="1" height="1"/></g>
<path d="M681 428V436.5H689" stroke="#3a7fc0" stroke-width="0.8" fill="none"/><path d="M681 436.5L685 432" stroke="#3b3" stroke-width="0.8"/><path d="M681 436.5H689" stroke="#e44" stroke-width="0.8"/>
<path d="M686.5 428V433M684 430.5H689" stroke="#222" stroke-width="1"/>
<rect x="528" y="450.5" width="69.5" height="9" fill="#f4f4f4" stroke="#333" stroke-width="0.5"/>
</svg><div class="a t fit" style="left:624px;top:428.5px;font-size:8px;color:#fff;font-weight:normal;--w:29px;">50.00 mm</div><div class="a t fit" style="left:529.5px;top:451px;font-size:7.5px;color:#111;font-weight:normal;--w:66px;">移動するボディを選択</div>
<svg width="1200" height="643" style="position:absolute;left:0;top:0;pointer-events:none">
<rect x="911.5" y="292.0" width="156" height="264.5" fill="#f0f0f0" stroke="#d0d0d0"/>
<rect x="912" y="292.5" width="155" height="13.5" fill="#ececec"/>
<path d="M912 305.5H1067" stroke="#d6d6d6"/>
<circle cx="917.9" cy="299" r="3.2" fill="#222"/><path d="M916 299H919.8" stroke="#fff" stroke-width="1"/>
<rect x="976.5" y="308.5" width="71" height="16" rx="1.5" fill="#fff" stroke="#dcdcdc"/>
<rect x="979.5" y="311.0" width="10" height="10.5" rx="2.5" fill="none" stroke="#555" stroke-width="1"/><rect x="982" y="313.5" width="5" height="6" fill="#d8d8d8"/><rect x="982" y="313.5" width="2.5" height="6" fill="#eaeaea"/>
<path d="M1040 315.5H1044L1042 318Z" fill="#222"/>
<rect x="976" y="327" width="49" height="17" rx="1" fill="#0696d7"/>
<path d="M981.5 330V340.5L984 338.2L985.8 341.5L987.3 340.8L985.6 337.6H988.5Z" fill="#fff" stroke="#444" stroke-width="0.5"/>
<path d="M1032.3 332.3L1037 337M1037 332.3L1032.3 337" stroke="#333" stroke-width="1.1"/>
<rect x="976" y="346" width="14.5" height="16.7" fill="#0696d7"/>
<path d="M983 348.5V354M981 350L983 348L985 350M983 354L979.5 357.5M983 354L987 356.5" stroke="#111" stroke-width="1.1" fill="none"/><circle cx="979.5" cy="357.5" r="1.2" fill="#111"/>
<path d="M1000 349V354.5M998 351L1000 349L1002 351M1000 354.5L996.5 358M1000 354.5L1004.5 356.5" stroke="#222" stroke-width="1.1" fill="none"/><circle cx="996.5" cy="358" r="1.2" fill="#222"/>
<path d="M1022.6 350.4A4.3 4.3 0 1 0 1023.3 356" stroke="#222" stroke-width="1.1" fill="none"/><path d="M1021 348.5L1024 350.5L1021.5 352.5Z" fill="#222"/>
<path d="M1034 358L1042 350.5" stroke="#222" stroke-width="1" stroke-dasharray="1.5,1"/><circle cx="1034" cy="358" r="1.3" fill="#222"/><circle cx="1042" cy="350.5" r="1.3" fill="#222"/>
<path d="M981.5 376L988 369.5" stroke="#222" stroke-width="1" stroke-dasharray="1.5,1"/><circle cx="988" cy="369.5" r="1.2" fill="#222"/><circle cx="980" cy="377" r="0.9" fill="#e44"/><circle cx="979" cy="375" r="0.9" fill="#3b3"/><circle cx="981" cy="378" r="0.9" fill="#33f"/>
<path d="M980 386V397H990" stroke="#3a7fc0" stroke-width="1" fill="none"/><path d="M980 397L985 392" stroke="#3b3" stroke-width="1"/><path d="M980 397H990" stroke="#e44" stroke-width="1"/>
<path d="M986 386.5V391.5M983.5 389H988.5" stroke="#222" stroke-width="1.2"/>
<rect x="976.5" y="403.5" width="71" height="15.5" rx="1" fill="#fff" stroke="#d8d8d8"/><rect x="976.5" y="422.5" width="71" height="15.5" rx="1" fill="#fff" stroke="#d8d8d8"/><rect x="976.5" y="441.0" width="71" height="15.5" rx="1" fill="#fff" stroke="#d8d8d8"/><rect x="976.5" y="460.0" width="71" height="15.5" rx="1" fill="#fff" stroke="#d8d8d8"/><rect x="976.5" y="479.0" width="71" height="15.5" rx="1" fill="#fff" stroke="#d8d8d8"/><rect x="976.5" y="498.0" width="71" height="15.5" rx="1" fill="#fff" stroke="#d8d8d8"/>
<rect x="978.5" y="518.5" width="9.5" height="10" rx="1.5" fill="#eee" stroke="#c8c8c8"/>
<path d="M980.5 523L982.8 525.8L986.5 520" stroke="#aaa" stroke-width="1" fill="none"/>
<path d="M912 533.5H1067" stroke="#d6d6d6"/>
<circle cx="919.9" cy="546" r="4" fill="#111"/><rect x="919.4" y="545" width="1" height="3.3" fill="#fff"/><rect x="919.4" y="543.2" width="1" height="1" fill="#fff"/>
<rect x="979.5" y="539.5" width="37" height="12" rx="1" fill="#e8e8e8" stroke="#c8c8c8"/>
<rect x="1022.5" y="539.5" width="38" height="12" rx="1" fill="#e8e8e8" stroke="#c8c8c8"/>
</svg><div class="a t fit" style="left:926px;top:295px;font-size:8px;color:#555;font-weight:normal;--w:30.5px;">移動/コピー</div><div class="a t fit" style="left:918.7px;top:312.5px;font-size:7.5px;color:#1a1a1a;font-weight:normal;--w:48px;">オブジェクトを移動</div><div class="a t fit" style="left:990px;top:312.5px;font-size:7.5px;color:#1a1a1a;font-weight:normal;--w:22px;">ボディ...</div><div class="a t fit" style="left:918.7px;top:331.5px;font-size:7.5px;color:#1a1a1a;font-weight:normal;--w:13.5px;">選択</div><div class="a t fit" style="left:990px;top:331px;font-size:7.5px;color:#fff;font-weight:normal;--w:30px;">1 選択済み</div><div class="a t fit" style="left:918.7px;top:350.5px;font-size:7.5px;color:#1a1a1a;font-weight:normal;--w:28.5px;">タイプ移動</div><div class="a t fit" style="left:918.7px;top:388px;font-size:7.5px;color:#1a1a1a;font-weight:normal;--w:33px;">ピボット設定</div><div class="a t fit" style="left:918.7px;top:520px;font-size:7.5px;color:#aaa;font-weight:normal;--w:34px;">コピーを作成</div><div class="a t fit" style="left:993px;top:541.5px;font-size:8px;color:#1a1a1a;font-weight:normal;--w:12px;">OK</div><div class="a t fit" style="left:1027px;top:541.5px;font-size:7.5px;color:#1a1a1a;font-weight:normal;--w:30px;">キャンセル</div><div class="a t fit" style="left:918.7px;top:407px;font-size:7.5px;color:#1a1a1a;font-weight:normal;--w:19.5px;">X 距離</div><div class="a t fit" style="left:977.8px;top:407px;font-size:8px;color:#1a1a1a;font-weight:normal;--w:26.5px;">0.00 mm</div><div class="a t fit" style="left:918.7px;top:426px;font-size:7.5px;color:#1a1a1a;font-weight:normal;--w:19.5px;">Y 距離</div><div class="a t fit" style="left:977.8px;top:426px;font-size:8px;color:#1a1a1a;font-weight:normal;--w:30.5px;">50.00 mm</div><div class="a t fit" style="left:918.7px;top:444.5px;font-size:7.5px;color:#1a1a1a;font-weight:normal;--w:19.5px;">Z 距離</div><div class="a t fit" style="left:977.8px;top:444.5px;font-size:8px;color:#1a1a1a;font-weight:normal;--w:26.5px;">0.00 mm</div><div class="a t fit" style="left:918.7px;top:463.5px;font-size:7.5px;color:#1a1a1a;font-weight:normal;--w:19.5px;">X 角度</div><div class="a t fit" style="left:977.8px;top:463.5px;font-size:8px;color:#1a1a1a;font-weight:normal;--w:23px;">0.0 deg</div><div class="a t fit" style="left:918.7px;top:482.5px;font-size:7.5px;color:#1a1a1a;font-weight:normal;--w:19.5px;">Y 角度</div><div class="a t fit" style="left:977.8px;top:482.5px;font-size:8px;color:#1a1a1a;font-weight:normal;--w:23px;">0.0 deg</div><div class="a t fit" style="left:918.7px;top:501.5px;font-size:7.5px;color:#1a1a1a;font-weight:normal;--w:19.5px;">Z 角度</div><div class="a t fit" style="left:977.8px;top:501.5px;font-size:8px;color:#1a1a1a;font-weight:normal;--w:23px;">0.0 deg</div>
<svg width="1200" height="643" style="position:absolute;left:0;top:0">
<rect x="0" y="613" width="1200" height="30" fill="#f0f0f0"/>
<path d="M0 613.5H1200" stroke="#d2d2d2"/>
<rect x="3.5" y="594.5" width="187" height="15" rx="1.5" fill="#efefef" stroke="#d0d0d0"/>
<circle cx="180.5" cy="602" r="3.2" fill="#222"/><path d="M178.7 602H182.3M180.5 600.2V603.8" stroke="#fff" stroke-width="1"/>
<path d="M187.5 598.5V605.5" stroke="#aaa"/>
<rect x="528.2" y="594.8" width="148.6" height="14.8" fill="#ececec" fill-opacity="0.95"/>
<g stroke="#4a4a4a" stroke-width="1.1" fill="none" stroke-linejoin="round">
<path d="M535.3 597Q536.5 600.5 540.5 602.3Q536.5 604 535.3 607.8Q534 604 530.2 602.3Q534 600.5 535.3 597Z"/>
<rect x="551.3" y="599.5" width="9.6" height="7.5" rx="2"/><path d="M553.5 599.5V597.8M558.8 599.5V597.8"/>
<path d="M569.5 607.5Q567.3 605 567.5 602.5L568.5 601.2L569.6 603.2V598.8Q569.6 598 570.5 598Q571.3 598 571.3 598.8V602.5V598Q571.3 597.2 572.2 597.2Q573.1 597.2 573.1 598V602.5V598.5Q573.1 597.8 574 597.8Q574.8 597.8 574.8 598.5V603V600Q574.8 599.3 575.6 599.3Q576.4 599.3 576.4 600V604Q576.4 607.5 572.5 607.8Z"/>
<circle cx="586.5" cy="602" r="3.1"/>
<circle cx="604" cy="601.8" r="3.6"/>
<path d="M599.5 597V608.5H610" stroke-dasharray="1.2,1" stroke-width="0.8"/>
</g>
<path d="M588.8 604.3L591.6 607.3M606.7 604.6L609.3 607.4" stroke="#222" stroke-width="1.8"/>
<rect x="552.8" y="601" width="6.6" height="4.5" fill="#bbb"/>
<path d="M592.3 596.8V599.6M590.9 598.2H593.7" stroke="#333" stroke-width="0.8"/>
<circle cx="531.8" cy="602.3" r="1.4" fill="#3a94dc"/>
<rect x="620.5" y="597.3" width="10.5" height="8" rx="1" fill="#6a9cd0" stroke="#666" stroke-width="1"/><path d="M622.5 600.5H629" stroke="#a8c8ea" stroke-width="1"/><path d="M623.5 607.5H628" stroke="#555" stroke-width="1.2"/>
<rect x="640.5" y="597.5" width="9.8" height="9.8" fill="#a8a8a8" stroke="#777" stroke-width="0.7"/>
<path d="M642.9 597.5V607.3M645.4 597.5V607.3M647.9 597.5V607.3M640.5 600H650.3M640.5 602.5H650.3M640.5 605H650.3" stroke="#d8d8d8" stroke-width="0.5"/>
<g fill="#6a9cd8" stroke="#445" stroke-width="0.7">
<rect x="659.8" y="597.5" width="4.3" height="4.3" rx="0.5"/><rect x="665" y="597.5" width="4.3" height="4.3" rx="0.5"/>
<rect x="659.8" y="602.7" width="4.3" height="4.3" rx="0.5"/><rect x="665" y="602.7" width="4.3" height="4.3" rx="0.5"/>
</g>
<g fill="#222"><path d="M543.6 601.3H546.8L545.2 603.5Z"/><path d="M613.8 601.3H617L615.4 603.5Z"/><path d="M632.8 601.3H636L634.4 603.5Z"/><path d="M652 601.3H655.2L653.6 603.5Z"/><path d="M671.4 601.3H674.6L673 603.5Z"/></g>
<g fill="#333">
<rect x="6.7" y="624.5" width="1.5" height="8.5"/><path d="M15 624.5V633L8.5 628.7Z"/>
<path d="M28 624.5V633L21.7 628.7Z"/><rect x="28.5" y="626" width="1.6" height="5.5"/>
<path d="M38 624V633.5L45.8 628.7Z"/>
<rect x="53" y="626" width="1.6" height="5.5"/><path d="M55 624.5V633L61.5 628.7Z"/>
<path d="M69 624.5V633L75.5 628.7Z"/><rect x="76" y="624.5" width="1.5" height="8.5"/>
</g>
<g transform="translate(91.5,624)">
<path d="M0 2.5L2 0.5H10L8 2.5Z" fill="#a8d8f8" stroke="#5aa0d8" stroke-width="0.5"/><rect x="0" y="2.5" width="8" height="7.5" fill="#6ab4ec" stroke="#5aa0d8" stroke-width="0.5"/><path d="M8 2.5L10 0.5V8L8 10Z" fill="#5aa4e0"/>
</g>
<g fill="none" stroke="#555" stroke-width="0.8">
<circle cx="109" cy="625.5" r="2.5"/><circle cx="114" cy="630.5" r="2.5"/>
<circle cx="170" cy="625.5" r="2.5"/><circle cx="175" cy="630.5" r="2.5"/>
</g>
<path d="M108 628V631H111" stroke="#3a7fc0" stroke-width="1" fill="none"/><path d="M169 628V631H172" stroke="#3a7fc0" stroke-width="1" fill="none"/>
<path d="M126.5 623.5V633.5M121.5 628.5H131.5" stroke="#222" stroke-width="1"/>
<path d="M126.5 622.5L124.5 625H128.5Z M126.5 634.5L124.5 632H128.5Z M120.5 628.5L123 626.5V630.5Z M132.5 628.5L130 626.5V630.5Z" fill="#222"/>
<path d="M139 626L145 624.5L147 630L141 632Z" fill="#e8915a"/><circle cx="139" cy="626" r="1" fill="#3b3"/><circle cx="147" cy="630" r="1" fill="#3b3"/><circle cx="141" cy="632" r="1" fill="#3b3"/>
<rect x="152.5" y="624" width="9.5" height="4" fill="#6ab0ea" stroke="#3a7fc0" stroke-width="0.5"/><rect x="152.5" y="629" width="9.5" height="4" fill="#eee" stroke="#666" stroke-width="0.5"/>
<path d="M97 634.5V638.5H172.5V634.5M112 634.5V638.5M127 634.5V638.5M142 634.5V638.5M157 634.5V638.5" stroke="#bdbdbd" stroke-width="1.2" fill="none"/>
<path d="M176.5 619.5H184L181.5 623.5H179Z" fill="#444"/><rect x="179.4" y="622" width="1.8" height="17" fill="#444"/>
<g transform="translate(1193,629)" fill="#888">
<rect x="-1" y="-5" width="2" height="10"/><rect x="-1" y="-5" width="2" height="10" transform="rotate(45)"/><rect x="-1" y="-5" width="2" height="10" transform="rotate(90)"/><rect x="-1" y="-5" width="2" height="10" transform="rotate(135)"/>
<circle r="3.5"/><circle r="1.5" fill="#f0f0f0"/>
</g>
</svg><div class="a t fit" style="left:17.5px;top:598.5px;font-size:7.5px;color:#444;font-weight:normal;--w:20px;">コメント</div><div class="a t fit" style="left:1173px;top:598px;font-size:8px;color:#111;font-weight:bold;--w:20.5px;">ボディ4</div>
<script>
document.querySelectorAll('.fit').forEach(function(e){
  var w=parseFloat(getComputedStyle(e).getPropertyValue('--w'));
  var n=e.getBoundingClientRect().width;
  if(w&&n){e.style.transform='scaleX('+(w/n)+')';}
});
</script>
</body></html>
